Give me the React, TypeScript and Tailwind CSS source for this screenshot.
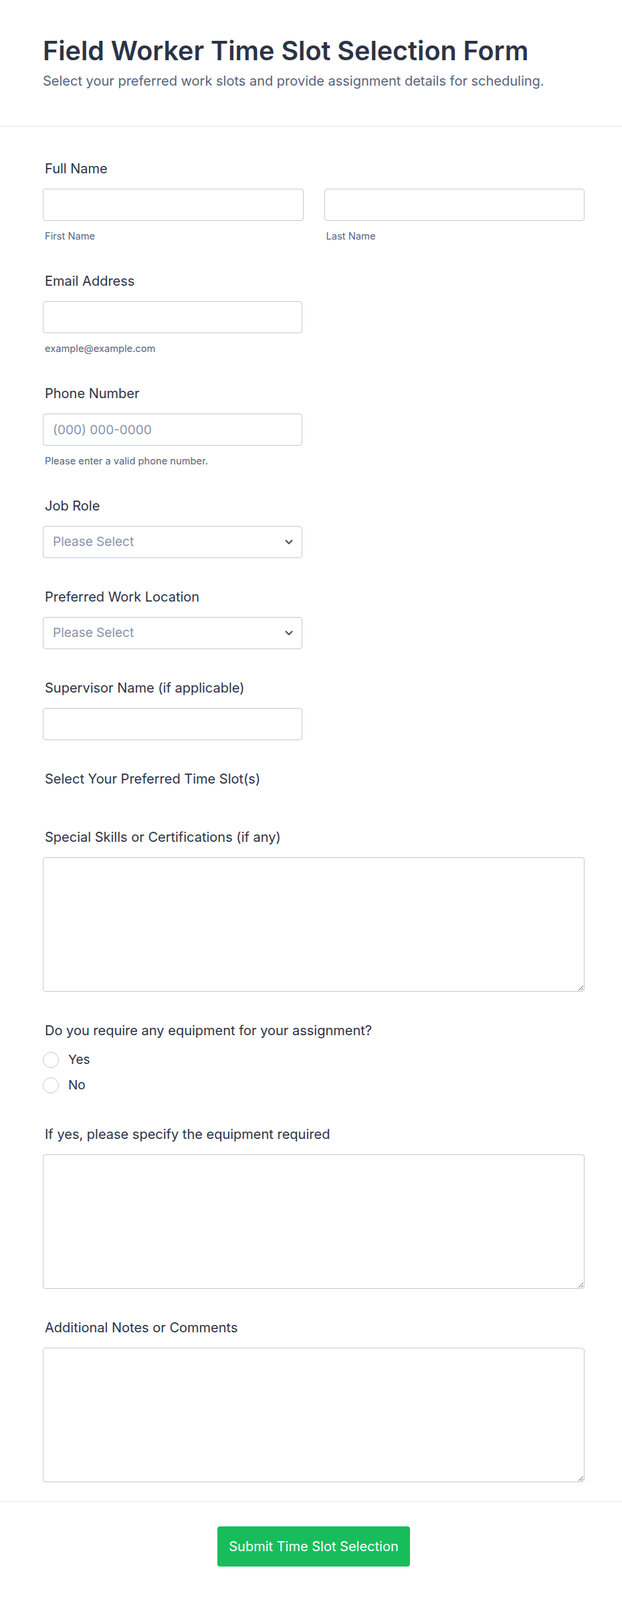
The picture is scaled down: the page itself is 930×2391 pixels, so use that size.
import { ChevronDown } from 'lucide-react';

const labelClass = 'block h-[28px] text-[20px] leading-[28px] font-normal text-[#2c3345] pl-[3px]';
const inputClass =
  'block h-[48px] w-full rounded-[4px] border border-[#c3c8d4] bg-white px-[14px] text-[19px] text-[#2c3345] placeholder:text-[#8894ab] outline-none';
const hintClass = 'mt-[14px] h-[18px] text-[14.7px] leading-[18px] text-[#57647e] pl-[3px]';

function Field({ label, children }: { label: string; children?: React.ReactNode }) {
  return (
    <div>
      <label className={labelClass}>{label}</label>
      <div className="mt-[16px]">{children}</div>
    </div>
  );
}

function SelectBox() {
  return (
    <div className="relative w-[388px]">
      <select
        defaultValue=""
        className={`${inputClass} appearance-none text-[#8894ab]`}
      >
        <option value="" disabled>
          Please Select
        </option>
      </select>
      <ChevronDown
        className="pointer-events-none absolute right-[11px] top-1/2 -translate-y-1/2 text-[#4b5468]"
        size={18}
        strokeWidth={3}
      />
    </div>
  );
}

function TextArea() {
  return (
    <textarea className="block h-[201px] w-full resize-y rounded-[4px] border border-[#c3c8d4] bg-white px-[14px] py-[10px] text-[19px] outline-none" />
  );
}

function Radio({ label }: { label: string }) {
  return (
    <label className="flex h-[30px] items-center gap-[14px]">
      <span className="h-[24px] w-[24px] rounded-full border border-[#c3c8d4] bg-white" />
      <span className="text-[19px] text-[#2c3345]">{label}</span>
    </label>
  );
}

export default function App() {
  return (
    <div className="min-h-screen bg-white font-['Inter',sans-serif]">
      {/* Header */}
      <div className="border-b border-[#e3e5ec] pl-[64px] pr-[56px] pt-[53px] pb-[53px]">
        <h1 className="text-[39.5px] leading-[47px] font-semibold text-[#2c3345]">
          Field Worker Time Slot Selection Form
        </h1>
        <p className="mt-[7px] text-[20px] leading-[28px] text-[#57647e]">
          Select your preferred work slots and provide assignment details for scheduling.
        </p>
      </div>

      {/* Form body */}
      <div className="flex flex-col gap-[44px] pl-[64px] pr-[56px] pt-[49px] pb-[28px]">
        <Field label="Full Name">
          <div className="grid grid-cols-2 gap-[31px]">
            <div>
              <input className={inputClass} />
              <div className={hintClass}>First Name</div>
            </div>
            <div>
              <input className={inputClass} />
              <div className={hintClass}>Last Name</div>
            </div>
          </div>
        </Field>

        <Field label="Email Address">
          <div className="w-[388px]">
            <input className={inputClass} />
            <div className={hintClass}>example@example.com</div>
          </div>
        </Field>

        <Field label="Phone Number">
          <div className="w-[388px]">
            <input className={inputClass} placeholder="(000) 000-0000" />
            <div className={hintClass}>Please enter a valid phone number.</div>
          </div>
        </Field>

        <Field label="Job Role">
          <SelectBox />
        </Field>

        <Field label="Preferred Work Location">
          <SelectBox />
        </Field>

        <Field label="Supervisor Name (if applicable)">
          <div className="w-[388px]">
            <input className={inputClass} />
          </div>
        </Field>

        <div>
          <label className={labelClass}>Select Your Preferred Time Slot(s)</label>
          <div className="h-[15px]" />
        </div>

        <Field label="Special Skills or Certifications (if any)">
          <TextArea />
        </Field>

        <div>
          <label className={labelClass}>Do you require any equipment for your assignment?</label>
          <div className="mt-[15px] flex flex-col gap-[8px]">
            <Radio label="Yes" />
            <Radio label="No" />
          </div>
        </div>

        <Field label="If yes, please specify the equipment required">
          <TextArea />
        </Field>

        <Field label="Additional Notes or Comments">
          <TextArea />
        </Field>
      </div>

      {/* Footer */}
      <div className="flex justify-center border-t border-[#e3e5ec] pl-[64px] pr-[56px] pt-[37px] pb-[50px]">
        <button className="h-[60px] w-[288px] rounded-[4px] bg-[#18bd5b] text-[20px] font-normal text-white">
          Submit Time Slot Selection
        </button>
      </div>
    </div>
  );
}
